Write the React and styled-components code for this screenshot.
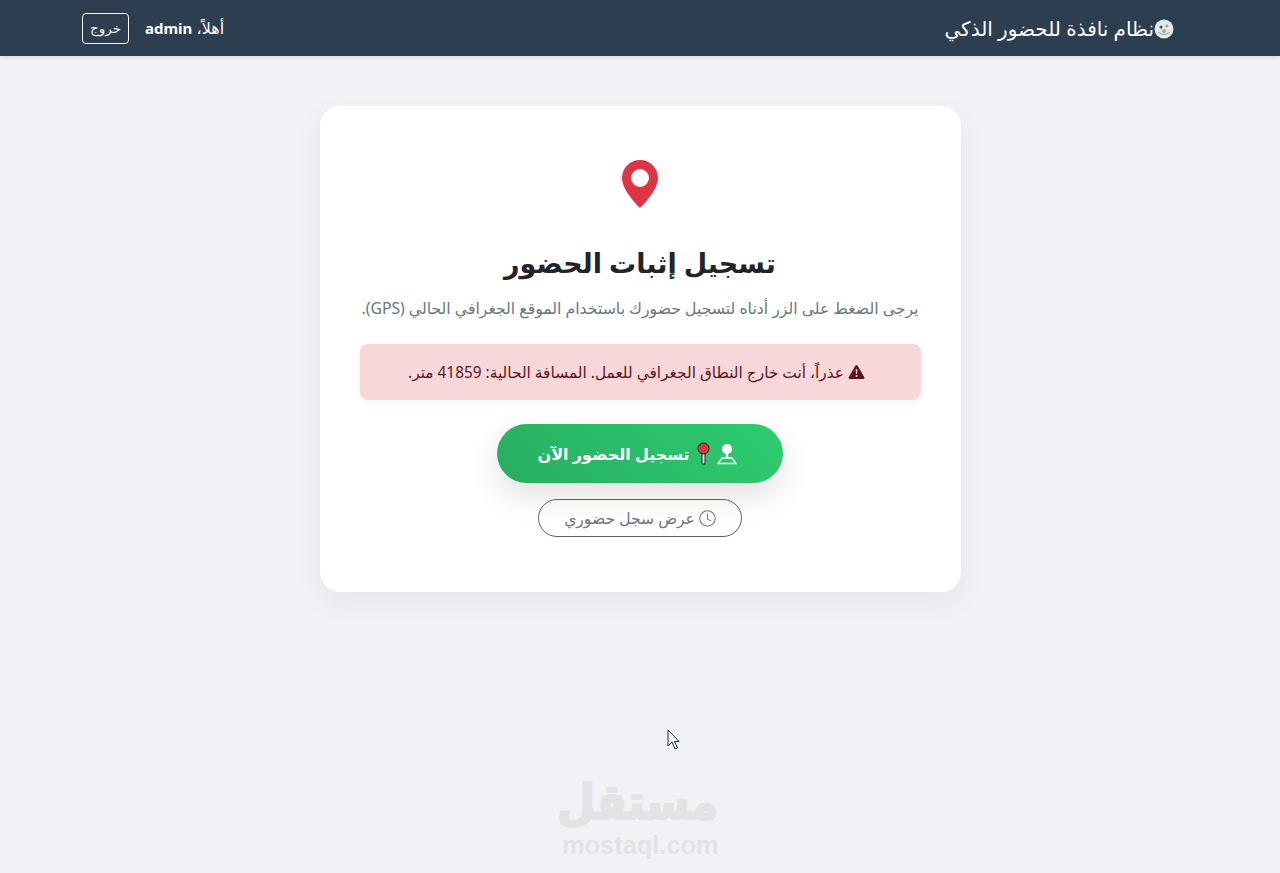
import React from 'react';
import styled, { createGlobalStyle } from 'styled-components';

const GlobalStyle = createGlobalStyle`
    * {
        box-sizing: border-box;
    }

    html, body {
        margin: 0;
        padding: 0;
        background: #f0f2f5;
    }

    body {
        font-family: "Noto Sans", "DejaVu Sans", "Liberation Sans", sans-serif;
        color: #212529;
    }
`;

const Page = styled.div`
    position: relative;
    min-height: 873px;
    overflow: hidden;
    direction: rtl;
`;

const Navbar = styled.nav`
    height: 56px;
    background: #2c3e50;
    box-shadow: 0 2px 4px rgba(0, 0, 0, 0.1);
    display: flex;
    justify-content: center;
`;

const NavInner = styled.div`
    width: 1140px;
    padding: 0 36px 0 12px;
    display: flex;
    align-items: center;
    justify-content: space-between;
`;

const Brand = styled.div`
    display: flex;
    align-items: center;
    padding-top: 2px;
    color: #fff;
    font-size: 20px;
    line-height: 1;
`;

const NavUser = styled.div`
    display: flex;
    align-items: center;
    gap: 16px;
    color: #fff;
    font-size: 16px;
`;

const Greeting = styled.span`
    b {
        font-size: 15px;
        font-weight: 700;
    }
`;

const LogoutButton = styled.button`
    width: 47px;
    height: 31px;
    padding: 0;
    border: 1px solid #f8f9fa;
    border-radius: 4px;
    background: transparent;
    color: #f8f9fa;
    font: inherit;
    font-size: 13.5px;
`;

const Main = styled.main`
    display: flex;
    justify-content: center;
    padding-top: 50px;
`;

const Card = styled.section`
    width: 641px;
    height: 486px;
    padding: 54px 40px 0;
    background: #fff;
    border-radius: 20px;
    box-shadow: 0 10px 30px rgba(0, 0, 0, 0.05);
    display: flex;
    flex-direction: column;
    align-items: center;
`;

const Heading = styled.h1`
    margin: 33px 0 0;
    font-size: 27px;
    line-height: 44px;
    font-weight: 700;
    color: #212529;
`;

const Lead = styled.p`
    margin: 11px 0 0;
    font-size: 15.7px;
    line-height: 24px;
    color: #6c757d;
`;

const Alert = styled.div`
    width: 561px;
    height: 56px;
    margin-top: 24px;
    padding-right: 7px;
    border-radius: 8px;
    background: #f8d7da;
    color: #58151c;
    font-size: 15.4px;
    box-shadow: 0 2px 6px rgba(0, 0, 0, 0.05);
    display: flex;
    align-items: center;
    justify-content: center;
    gap: 4px;
`;

const CheckInButton = styled.button`
    width: 286px;
    height: 59px;
    margin-top: 24px;
    padding-right: 12px;
    border: 0;
    border-radius: 30px;
    background: linear-gradient(45deg, #27ae60, #2ecc71);
    box-shadow: 0 12px 32px rgba(0, 0, 0, 0.12);
    color: #fff;
    font: inherit;
    font-size: 16px;
    font-weight: 700;
    display: flex;
    align-items: center;
    justify-content: center;
    gap: 7px;
`;

const HistoryButton = styled.button`
    width: 204px;
    height: 38px;
    margin-top: 16px;
    padding: 0;
    border: 1px solid #58617e;
    border-radius: 19px;
    background: transparent;
    color: #6c757d;
    font: inherit;
    font-size: 15.6px;
    display: flex;
    align-items: center;
    justify-content: center;
    gap: 4px;
`;

const Watermark = styled.div`
    position: absolute;
    left: 562px;
    top: 778px;
    width: 156px;
    text-align: center;
    color: #e1e3e5;
    font-weight: 700;
    pointer-events: none;
`;

const WatermarkArabic = styled.div`
    height: 54px;
    font-size: 44px;
    line-height: 50px;
    white-space: nowrap;
    -webkit-text-stroke: 2px #e1e3e5;
    transform: scaleY(1.12);
    transform-origin: bottom;
`;

const WatermarkLatin = styled.div`
    font-family: "Liberation Sans", sans-serif;
    font-size: 25.4px;
    line-height: 26px;
    direction: ltr;
`;

const Cursor = styled.svg`
    position: absolute;
    left: 667px;
    top: 729px;
`;

const SchoolIcon = () => (
    <svg width="20" height="20" viewBox="0 0 20 20">
        <circle cx="10" cy="10" r="9.5" fill="#dfe8ea" />
        <circle cx="7" cy="8" r="1.6" fill="#4a5b6b" />
        <circle cx="13" cy="7" r="1.4" fill="#7da7c4" />
        <circle cx="10" cy="12" r="2" fill="#c9a27a" />
        <path d="M4 13q6 5 12 0" stroke="#8fa3b3" fill="none" />
    </svg>
);

const PinIcon = () => (
    <svg width="48" height="48" viewBox="0 0 16 16">
        <path
            fill="#dc3545"
            d="M8 16s6-5.686 6-10A6 6 0 0 0 2 6c0 4.314 6 10 6 10m0-7a3 3 0 1 1 0-6 3 3 0 0 1 0 6"
        />
    </svg>
);

const WarningIcon = () => (
    <svg width="17" height="16" viewBox="0 0 16 16">
        <path
            fill="#58151c"
            d="M8.982 1.566a1.13 1.13 0 0 0-1.96 0L.165 13.233c-.457.778.091 1.767.98 1.767h13.713c.889 0 1.438-.99.98-1.767zM8 5c.535 0 .954.462.9.995l-.35 3.507a.552.552 0 0 1-1.1 0L7.1 5.995A.905.905 0 0 1 8 5m.002 6a1 1 0 1 1 0 2 1 1 0 0 1 0-2"
        />
    </svg>
);

const MapPersonIcon = () => (
    <svg width="20" height="22" viewBox="0 0 20 22">
        <circle cx="10" cy="6" r="5" fill="#fff" />
        <path d="M8.8 10h2.4v6H8.8z" fill="#fff" />
        <path d="M5 15h10l4 5.5H1z" fill="none" stroke="#fff" strokeWidth="1.3" />
    </svg>
);

const RoundPinIcon = () => (
    <svg width="13" height="23" viewBox="0 0 13 23">
        <path d="M5 10h3v12H5z" fill="#e8e8e8" stroke="#222" strokeWidth="1" />
        <circle cx="6.5" cy="6.5" r="5.5" fill="#dc3545" stroke="#222" strokeWidth="1" />
    </svg>
);

const ClockIcon = () => (
    <svg width="17" height="17" viewBox="0 0 16 16">
        <circle cx="8" cy="8" r="7.3" fill="none" stroke="#6c757d" strokeWidth="1" />
        <path d="M8 3.5V8.5L11.5 10.5" fill="none" stroke="#6c757d" strokeWidth="1" />
    </svg>
);

const App = () => (
    <Page>
        <GlobalStyle />
        <Navbar>
            <NavInner>
                <Brand>
                    <SchoolIcon />
                    نظام نافذة للحضور الذكي
                </Brand>
                <NavUser>
                    <Greeting>أهلاً، <b>admin</b></Greeting>
                    <LogoutButton>خروج</LogoutButton>
                </NavUser>
            </NavInner>
        </Navbar>
        <Main>
            <Card>
                <PinIcon />
                <Heading>تسجيل إثبات الحضور</Heading>
                <Lead>يرجى الضغط على الزر أدناه لتسجيل حضورك باستخدام الموقع الجغرافي الحالي (GPS).</Lead>
                <Alert>
                    <WarningIcon />
                    عذراً، أنت خارج النطاق الجغرافي للعمل. المسافة الحالية: 41859 متر.
                </Alert>
                <CheckInButton>
                    <MapPersonIcon />
                    <RoundPinIcon />
                    تسجيل الحضور الآن
                </CheckInButton>
                <HistoryButton>
                    <ClockIcon />
                    عرض سجل حضوري
                </HistoryButton>
            </Card>
        </Main>
        <Watermark>
            <WatermarkArabic>مستقل</WatermarkArabic>
            <WatermarkLatin>mostaql.com</WatermarkLatin>
        </Watermark>
        <Cursor width="13" height="21" viewBox="0 0 13 21">
            <path d="M1 1v16l4-4 3 7 2.5-1-3-6.5H12z" fill="#fff" stroke="#1c2733" strokeWidth="1" />
        </Cursor>
    </Page>
);

export default App;
